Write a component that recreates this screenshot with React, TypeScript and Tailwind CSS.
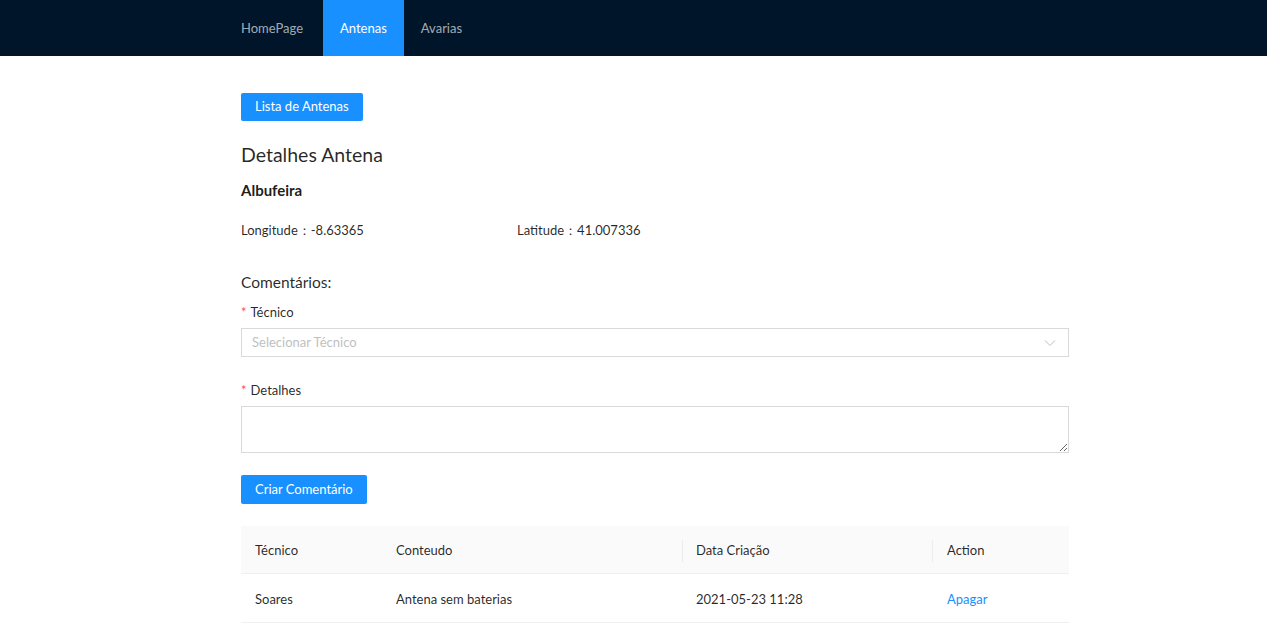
import React from "react";

const font = { fontFamily: 'Lato, "Noto Sans", sans-serif' };

export default function App() {
  return (
    <div className="min-h-[635px] bg-white text-[13px] text-[rgba(0,0,0,0.85)]" style={font}>
      <header className="h-[56px] bg-[#001529] flex pl-[221px] text-[13px]">
        <div className="px-[20px] pt-[2px] flex items-center text-[rgba(255,255,255,0.65)]">HomePage</div>
        <div className="px-[17px] pt-[2px] flex items-center bg-[#1890ff] text-white">Antenas</div>
        <div className="px-[17px] pt-[2px] flex items-center text-[rgba(255,255,255,0.65)]">Avarias</div>
      </header>
      <main className="ml-[241px] w-[828px] pt-[37px]">
        <button className="h-[28px] px-[14px] bg-[#1890ff] text-white rounded-[2px] text-[13px]">
          Lista de Antenas
        </button>
        <h2 className="text-[19.5px] mt-[20px] leading-[28px]">Detalhes Antena</h2>
        <div className="font-bold text-[15px] mt-[10px] leading-[22px] text-[rgba(0,0,0,0.9)]">Albufeira</div>
        <div className="grid grid-cols-3 mt-[18px] leading-[22px]">
          <div>Longitude：-8.63365</div>
          <div>Latitude：41.007336</div>
          <div></div>
        </div>
        <h3 className="text-[15.5px] mt-[29px] leading-[24px]">Comentários:</h3>
        <div className="mt-[7px] leading-[22px]">
          <span className="text-[#ff4d4f] mr-[4px]">*</span>Técnico
        </div>
        <div className="mt-[5px] h-[29px] border border-[#d9d9d9] flex items-center justify-between px-[10px]">
          <span className="text-[#bfbfbf] text-[13px]">Selecionar Técnico</span>
          <svg width="12" height="12" viewBox="0 0 12 12" className="mr-[2px]">
            <path d="M1 3.5 L6 8.5 L11 3.5" fill="none" stroke="#bfbfbf" strokeWidth="1" />
          </svg>
        </div>
        <div className="mt-[22px] leading-[22px]">
          <span className="text-[#ff4d4f] mr-[4px]">*</span>Detalhes
        </div>
        <textarea className="mt-[5px] block w-full h-[47px] border border-[#d9d9d9] resize-y outline-none" />
        <button className="mt-[22px] h-[29px] px-[14px] bg-[#1890ff] text-white rounded-[2px] text-[13px]">
          Criar Comentário
        </button>
        <div className="mt-[22px]">
          <div className="grid grid-cols-[141px_300px_250px_137px] bg-[#fafafa] h-[48px] border-b border-[#f0f0f0] items-center pt-[2px]">
            <div className="pl-[14px]">Técnico</div>
            <div className="pl-[14px]">Conteudo</div>
            <div className="pl-[14px] relative">
              <span className="absolute left-0 top-1/2 -translate-y-1/2 h-[22px] w-px bg-[#ececec]" />
              Data Criação
            </div>
            <div className="pl-[15px] relative">
              <span className="absolute left-0 top-1/2 -translate-y-1/2 h-[22px] w-px bg-[#ececec]" />
              Action
            </div>
          </div>
          <div className="grid grid-cols-[141px_300px_250px_137px] h-[49px] border-b border-[#f0f0f0] items-center pt-[3px]">
            <div className="pl-[14px]">Soares</div>
            <div className="pl-[14px]">Antena sem baterias</div>
            <div className="pl-[14px]">2021-05-23 11:28</div>
            <div className="pl-[15px] text-[#1890ff]">Apagar</div>
          </div>
        </div>
      </main>
    </div>
  );
}
